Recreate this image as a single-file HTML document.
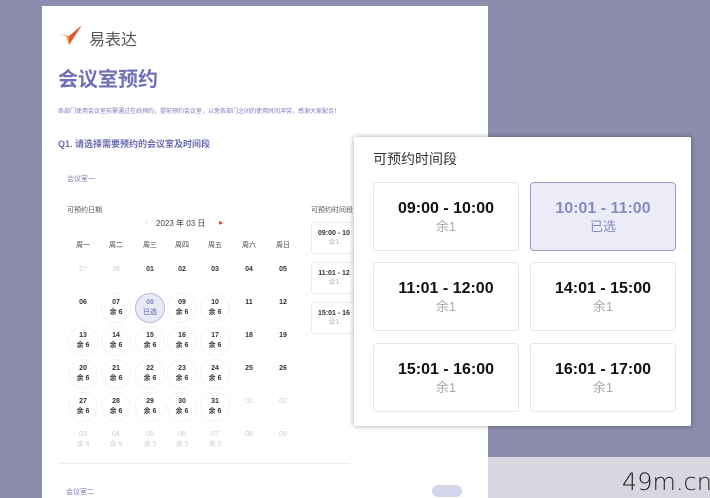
<!DOCTYPE html>
<html><head><meta charset="utf-8"><style>
*{margin:0;padding:0;box-sizing:border-box}
body{width:710px;height:498px;overflow:hidden;background:#8c8cad;position:relative;font-family:"Liberation Sans","Noto Sans CJK SC",sans-serif}
.a{position:absolute;white-space:nowrap}
.card{position:absolute;left:42px;top:6px;width:446px;height:492px;background:#fff}
.strip{position:absolute;left:488px;top:457px;width:222px;height:41px;background:#d7d7e1}
.wd{font-size:7px;color:#444;transform:translateX(-50%)}
.d{font-size:7px;font-weight:bold;color:#333;transform:translateX(-50%);text-align:center;line-height:10px}
.d.g{color:#ccc;font-weight:normal}
.circ{position:absolute;width:30px;height:30px;border-radius:50%;border:1px solid #f5f5f8;transform:translate(-50%,0)}
.pop{position:absolute;left:354px;top:137px;width:337px;height:289px;background:#fff;box-shadow:0 0 6px rgba(0,0,0,.35);border-radius:2px}
.slot{position:absolute;width:146px;height:69px;border:1px solid #e6e6ea;border-radius:4px;text-align:center;background:#fff}
.slot b{display:block;font-size:16px;color:#111;margin-top:17px;line-height:18px}
.slot span{display:block;font-size:13px;color:#aaa;line-height:17px}
.sm{position:absolute;left:311px;width:46px;height:32px;border:1px solid #eee;border-radius:3px;text-align:center;font-size:7px;font-weight:bold;color:#333;padding-top:7px}
</style></head><body>
<div class="card"></div>
<div class="strip"></div>
<div class="a" style="left:622px;top:468px;font-size:24px;color:#222;font-family:'DejaVu Sans',sans-serif;font-weight:300">49m.cn</div>

<svg class="a" style="left:57px;top:24px" width="26" height="22" viewBox="0 0 26 22"><path d="M1 10 L9 12 L12 21 L25 1 L12 12 Z" fill="#e8542a"/><path d="M9 12 L12 21 L12 12Z" fill="#f0a040"/></svg>
<div class="a" style="left:89px;top:26px;font-size:16px;color:#555">易表达</div>
<div class="a" style="left:58px;top:63px;font-size:20px;font-weight:bold;color:#6f6fb8">会议室预约</div>
<div class="a" style="left:58px;top:106px;font-size:6px;color:#7a7ac0">各部门使用会议室前需通过在线预约，提前预约会议室，以免各部门之间的使用时间冲突，感谢大家配合！</div>
<div class="a" style="left:58px;top:137px;font-size:9px;font-weight:bold;color:#6a6ab0">Q1. 请选择需要预约的会议室及时间段</div>
<div class="a" style="left:67px;top:174px;font-size:7px;color:#7a7ab8">会议室一</div>
<div class="a" style="left:67px;top:205px;font-size:7px;color:#555">可预约日期</div>
<div class="a" style="left:145px;top:218px;font-size:8px;color:#ccc">‹</div>
<div class="a" style="left:156px;top:218px;font-size:8px;color:#444">2023 年 03 日</div>
<div class="a" style="left:219px;top:218px;font-size:8px;color:#e33">▸</div>

<div class="a wd" style="left:83px;top:240px">周一</div><div class="a wd" style="left:116px;top:240px">周二</div><div class="a wd" style="left:150px;top:240px">周三</div><div class="a wd" style="left:182px;top:240px">周四</div><div class="a wd" style="left:215px;top:240px">周五</div><div class="a wd" style="left:249px;top:240px">周六</div><div class="a wd" style="left:283px;top:240px">周日</div>

<div class="circ" style="left:116px;top:293px"></div>
<div class="circ" style="left:150px;top:293px;background:#e9e9f6;border-color:#b8b8dc"></div>
<div class="circ" style="left:182px;top:293px"></div><div class="circ" style="left:215px;top:293px"></div>
<div class="circ" style="left:83px;top:326px"></div><div class="circ" style="left:116px;top:326px"></div><div class="circ" style="left:150px;top:326px"></div><div class="circ" style="left:182px;top:326px"></div><div class="circ" style="left:215px;top:326px"></div>
<div class="circ" style="left:83px;top:359px"></div><div class="circ" style="left:116px;top:359px"></div><div class="circ" style="left:150px;top:359px"></div><div class="circ" style="left:182px;top:359px"></div><div class="circ" style="left:215px;top:359px"></div>
<div class="circ" style="left:83px;top:392px"></div><div class="circ" style="left:116px;top:392px"></div><div class="circ" style="left:150px;top:392px"></div><div class="circ" style="left:182px;top:392px"></div><div class="circ" style="left:215px;top:392px"></div>

<div class="a d g" style="left:83px;top:265px">27</div><div class="a d g" style="left:116px;top:265px">28</div><div class="a d" style="left:150px;top:265px">01</div><div class="a d" style="left:182px;top:265px">02</div><div class="a d" style="left:215px;top:265px">03</div><div class="a d" style="left:249px;top:265px">04</div><div class="a d" style="left:283px;top:265px">05</div>

<div class="a d" style="left:83px;top:298px">06</div><div class="a d" style="left:116px;top:298px">07<br>余 6</div><div class="a d" style="left:150px;top:298px;color:#8a8ac4">08<br>已选</div><div class="a d" style="left:182px;top:298px">09<br>余 6</div><div class="a d" style="left:215px;top:298px">10<br>余 6</div><div class="a d" style="left:249px;top:298px">11</div><div class="a d" style="left:283px;top:298px">12</div>

<div class="a d" style="left:83px;top:331px">13<br>余 6</div><div class="a d" style="left:116px;top:331px">14<br>余 6</div><div class="a d" style="left:150px;top:331px">15<br>余 6</div><div class="a d" style="left:182px;top:331px">16<br>余 6</div><div class="a d" style="left:215px;top:331px">17<br>余 6</div><div class="a d" style="left:249px;top:331px">18</div><div class="a d" style="left:283px;top:331px">19</div>

<div class="a d" style="left:83px;top:364px">20<br>余 6</div><div class="a d" style="left:116px;top:364px">21<br>余 6</div><div class="a d" style="left:150px;top:364px">22<br>余 6</div><div class="a d" style="left:182px;top:364px">23<br>余 6</div><div class="a d" style="left:215px;top:364px">24<br>余 6</div><div class="a d" style="left:249px;top:364px">25</div><div class="a d" style="left:283px;top:364px">26</div>

<div class="a d" style="left:83px;top:397px">27<br>余 6</div><div class="a d" style="left:116px;top:397px">28<br>余 6</div><div class="a d" style="left:150px;top:397px">29<br>余 6</div><div class="a d" style="left:182px;top:397px">30<br>余 6</div><div class="a d" style="left:215px;top:397px">31<br>余 6</div><div class="a d g" style="left:249px;top:397px">01</div><div class="a d g" style="left:283px;top:397px">02</div>

<div class="a d g" style="left:83px;top:430px">03<br>余 5</div><div class="a d g" style="left:116px;top:430px">04<br>余 5</div><div class="a d g" style="left:150px;top:430px">05<br>余 5</div><div class="a d g" style="left:182px;top:430px">06<br>余 5</div><div class="a d g" style="left:215px;top:430px">07<br>余 5</div><div class="a d g" style="left:249px;top:430px">08</div><div class="a d g" style="left:283px;top:430px">09</div>

<div class="a" style="left:311px;top:205px;font-size:7px;color:#555">可预约时间段</div>
<div class="sm" style="top:222px">09:00 - 10<br><span style="color:#bbb;font-weight:normal">余1</span></div>
<div class="sm" style="top:262px">11:01 - 12<br><span style="color:#bbb;font-weight:normal">余1</span></div>
<div class="sm" style="top:302px">15:01 - 16<br><span style="color:#bbb;font-weight:normal">余1</span></div>

<div class="a" style="left:60px;top:463px;width:290px;height:1px;background:#eee"></div>
<div class="a" style="left:66px;top:487px;font-size:7px;color:#7a7ab8">会议室二</div>
<div class="a" style="left:432px;top:485px;width:30px;height:12px;border-radius:6px;background:#d4d4ec"></div>

<div class="pop">
<div class="a" style="left:19px;top:12px;font-size:14px;color:#333">可预约时间段</div>
<div class="slot" style="left:19px;top:45px"><b>09:00 - 10:00</b><span>余1</span></div>
<div class="slot" style="left:176px;top:45px;background:#ececf8;border-color:#9a9acb"><b style="color:#8a8ac0">10:01 - 11:00</b><span style="color:#8a8ac0">已选</span></div>
<div class="slot" style="left:19px;top:125px"><b>11:01 - 12:00</b><span>余1</span></div>
<div class="slot" style="left:176px;top:125px"><b>14:01 - 15:00</b><span>余1</span></div>
<div class="slot" style="left:19px;top:206px"><b>15:01 - 16:00</b><span>余1</span></div>
<div class="slot" style="left:176px;top:206px"><b>16:01 - 17:00</b><span>余1</span></div>
</div>
</body></html>
